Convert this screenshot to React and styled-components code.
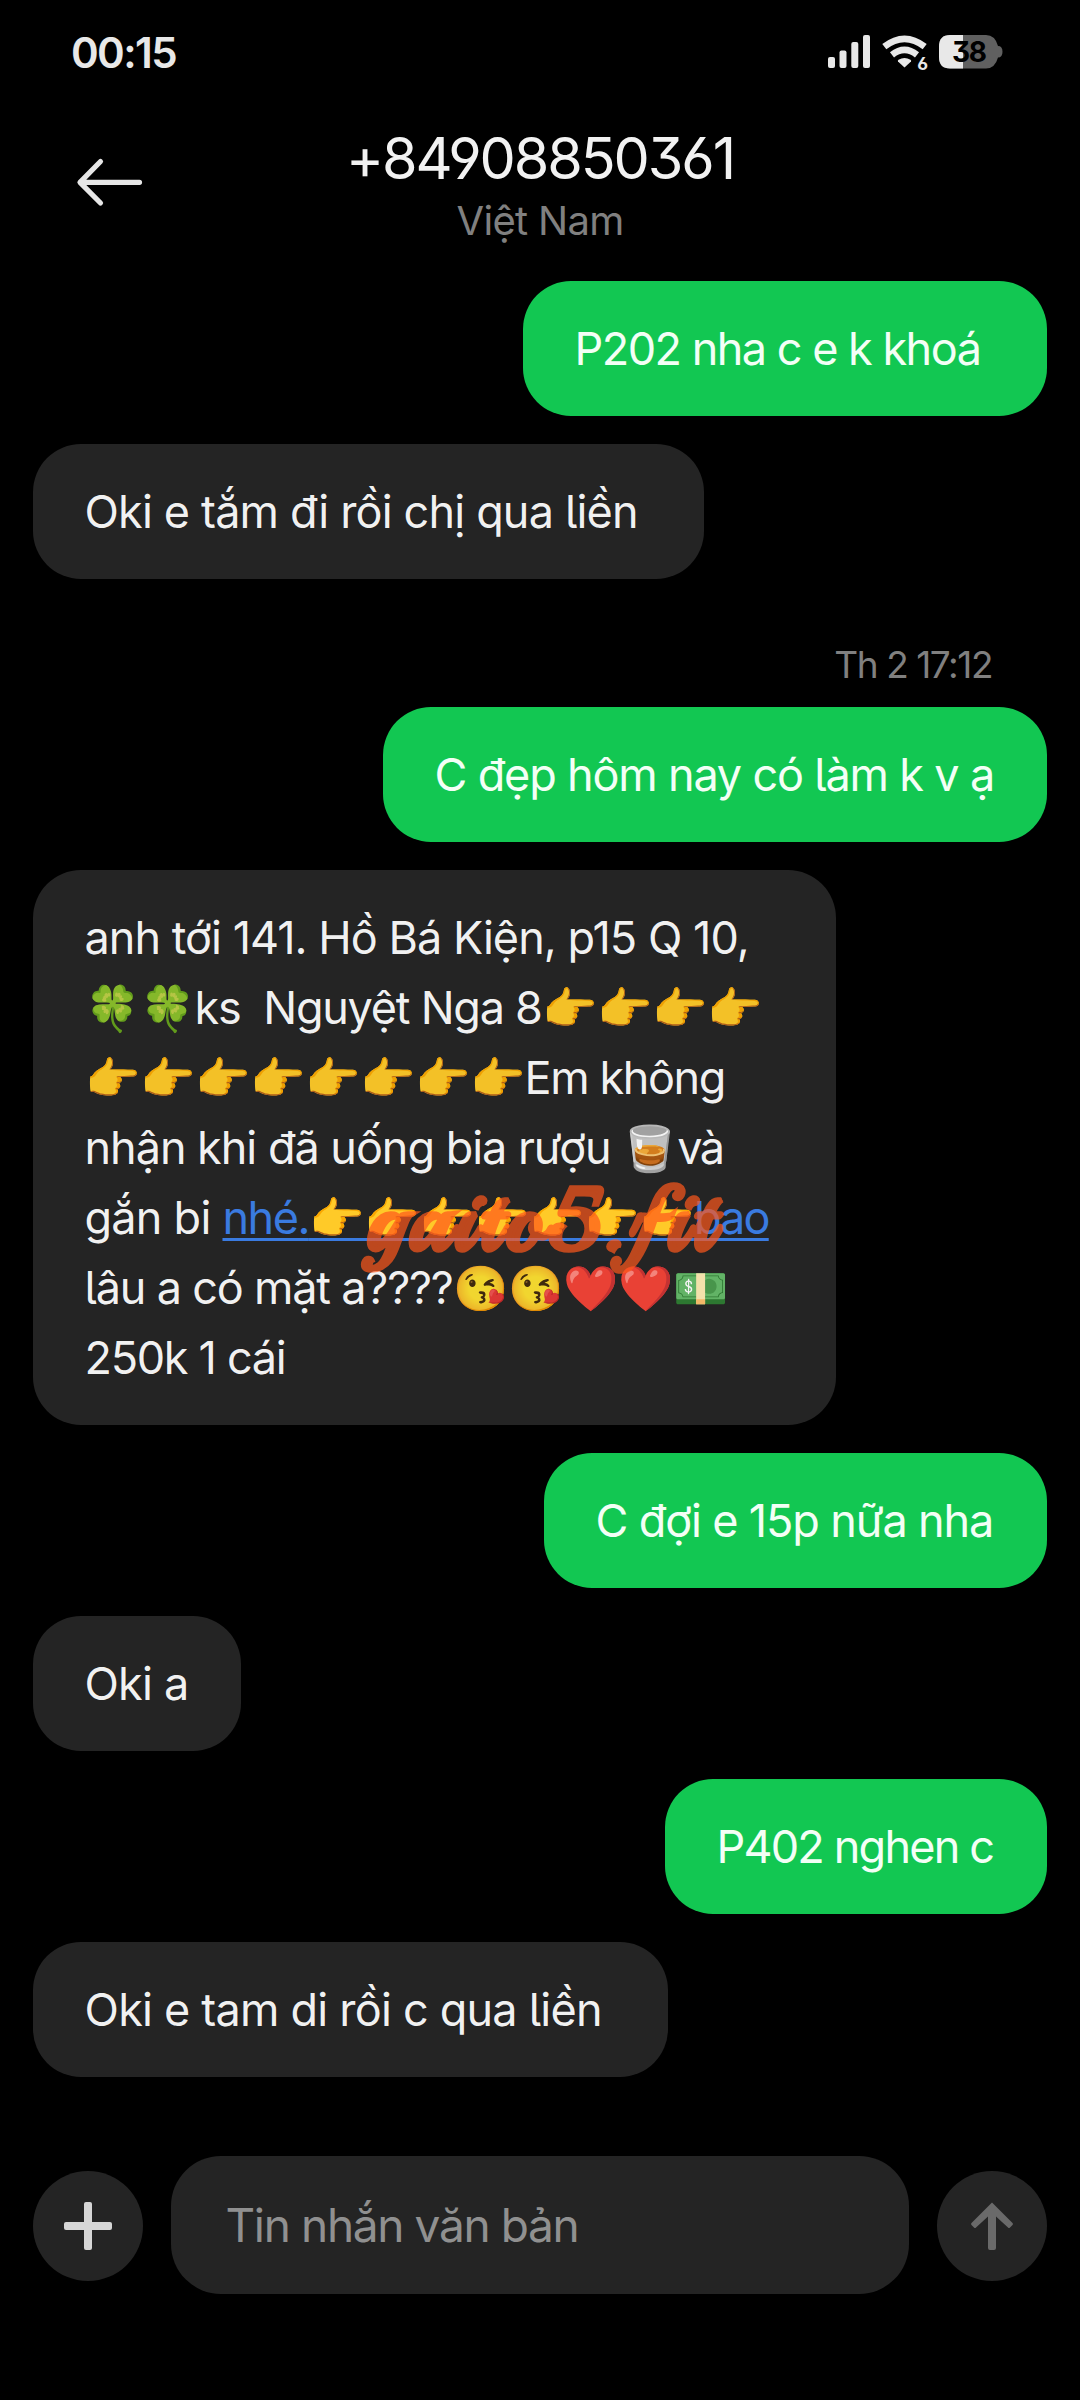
import React from "react";
import styled, { createGlobalStyle } from "styled-components";

const GlobalStyle = createGlobalStyle`
  * {
    box-sizing: border-box;
  }
  body {
    margin: 0;
    background-color: #000;
    font-family: Inter, "Noto Sans", sans-serif;
    font-feature-settings: "cv03", "cv04", "cv05", "cv09";
  }
`;

const Screen = styled.div`
  width: 1080px;
  height: 2400px;
  display: flex;
  flex-direction: column;
  background-color: #000;
  overflow: hidden;
`;

const StatusBar = styled.div`
  height: 104px;
  padding: 0 76px 0 71px;
  display: flex;
  align-items: center;
  justify-content: space-between;
`;

const Clock = styled.div`
  padding-top: 1px;
  color: #e8e8e8;
  font-size: 42px;
  font-weight: 600;
  line-height: 50px;
  letter-spacing: -1.6px;
`;

const StatusIcons = styled.svg`
  width: 176px;
  height: 40px;
  display: block;
`;

const Header = styled.header`
  height: 149px;
  padding: 0 76px;
  display: grid;
  grid-template-columns: 68px 1fr 68px;
`;

const BackButton = styled.button`
  height: 156px;
  padding: 0;
  border: 0;
  background: none;
  display: flex;
  align-items: center;
`;

const Contact = styled.div`
  padding-top: 19px;
  text-align: center;
`;

const Phone = styled.div`
  color: #f2f2f2;
  font-size: 57.5px;
  line-height: 70px;
  letter-spacing: -2.1px;
`;

const Region = styled.div`
  padding-top: 2px;
  color: #808080;
  font-size: 40px;
  line-height: 52px;
  letter-spacing: -0.7px;
`;

const Thread = styled.main`
  padding: 28px 33px 0;
  display: flex;
  flex-direction: column;
  gap: 28px;
`;

const Stamp = styled.div`
  height: 72px;
  margin-top: 28px;
  margin-bottom: -28px;
  padding: 7px 55px 0 0;
  color: #808080;
  font-size: 37px;
  line-height: 46px;
  letter-spacing: -1.45px;
  text-align: right;
`;

const Bubble = styled.div`
  position: relative;
  width: ${(p) => p.$width}px;
  padding: 33px 0 32px 51.5px;
  align-self: ${(p) => (p.$sent ? "flex-end" : "flex-start")};
  border-radius: 48px;
  background-color: ${(p) => (p.$sent ? "#12c752" : "#242424")};
  color: ${(p) => (p.$sent ? "#f3fff6" : "rgba(255, 255, 255, 0.95)")};
  font-size: 45px;
  font-weight: 380;
  line-height: 70px;
  white-space: pre;
`;

const Line = styled.div`
  height: 70px;
`;

const Run = styled.span`
  letter-spacing: ${(p) => p.$track}px;
`;

const Emoji = styled.span`
  font-size: 44.4px;
  line-height: 0;
  letter-spacing: 0;
`;

const Link = styled.span`
  color: #3a7be0;
  text-decoration: underline;
  text-decoration-thickness: 3px;
  text-underline-offset: 4px;
  text-decoration-skip-ink: none;
`;

const Watermark = styled.div`
  position: absolute;
  left: 334px;
  top: 291px;
  color: #ff581c;
  opacity: 0.7;
  font-family: "Playball", "Lobster Two", "Lobster", fantasy;
  font-size: 87px;
  font-weight: 700;
  line-height: 120px;
  letter-spacing: 5px;
  -webkit-text-stroke: 3px #ff581c;
`;

const Composer = styled.footer`
  margin-top: 79px;
  padding: 0 33px;
  display: flex;
  align-items: center;
  gap: 28px;
`;

const RoundButton = styled.button`
  width: 110px;
  height: 110px;
  margin-top: 2px;
  padding: 0;
  border: 0;
  border-radius: 50%;
  background-color: #242424;
  display: flex;
  align-items: center;
  justify-content: center;
`;

const Field = styled.div`
  flex: 1;
  height: 138px;
  padding-left: 54.5px;
  border-radius: 50px;
  background-color: #242424;
  color: #909090;
  font-size: 46px;
  line-height: 139px;
  letter-spacing: -1.35px;
`;

const SignalWifiBattery = () => (
  <StatusIcons viewBox="828 32 176 40">
    <g fill="#e8e8e8">
      <rect x="828" y="57" width="7" height="11" rx="2" />
      <rect x="839.5" y="50.5" width="7" height="17.5" rx="2" />
      <rect x="851.3" y="42" width="7" height="26" rx="2" />
      <rect x="863" y="35" width="7" height="33" rx="2" />
      <path d="M904.5 67.5 L898 61.5 Q897.5 60.5 898.5 59.8 Q904.5 56.2 910.5 59.8 Q911.5 60.5 911 61.5 Z" />
    </g>
    <g fill="none" stroke="#e8e8e8" strokeWidth="6.6">
      <path d="M884.3 46.6 Q904.5 31 924.7 46.6" />
      <path d="M892 54.8 Q904.5 45 917 54.8" />
    </g>
    <text x="917.3" y="69.5" fill="#e8e8e8" fontSize="17.5" fontWeight="700">
      6
    </text>
    <path
      d="M950 35 H986 Q995 35 998 46 Q1002.5 46 1002.5 51.7 Q1002.5 57.5 998 57.5 Q995 68.5 986 68.5 H950 Q939 68.5 939 57 V46.5 Q939 35 950 35 Z"
      fill="#606060"
    />
    <path
      d="M963 35 H950 Q939 35 939 46.5 V57 Q939 68.5 950 68.5 H963 Z"
      fill="#e8e8e8"
    />
    <text
      x="968.7"
      y="62"
      textAnchor="middle"
      fill="#000"
      fontSize="28"
      fontWeight="700"
      letterSpacing="-1.5"
    >
      38
    </text>
  </StatusIcons>
);

const BackIcon = () => (
  <svg
    width="68"
    height="50"
    viewBox="76 157 68 50"
    fill="none"
    stroke="#e6e6e6"
    strokeWidth="5.2"
    strokeLinecap="round"
    strokeLinejoin="round"
  >
    <path d="M100.5 161.5 L80 182.3 L100.5 203 M81 182.3 H139.5" />
  </svg>
);

const PlusIcon = () => (
  <svg width="48" height="48" viewBox="0 0 48 48" fill="#d6d6d6">
    <rect x="0" y="20" width="48" height="8" rx="2" />
    <rect x="20" y="0" width="8" height="48" rx="2" />
  </svg>
);

const SendIcon = () => (
  <svg width="48" height="48" viewBox="0 0 48 48" fill="#6a6a6a">
    <path d="M24 0.5 L44.5 21 Q45.5 22 44.5 23 L42 25.5 Q41 26.5 40 25.5 L28 14.5 V46 Q28 48 26 48 H22 Q20 48 20 46 V14.5 L8 25.5 Q7 26.5 6 25.5 L3.5 23 Q2.5 22 3.5 21 Z" />
  </svg>
);

const Message = ({ text, track, width, sent }) => (
  <Bubble $sent={sent} $width={width}>
    <Run $track={track}>{text}</Run>
  </Bubble>
);

const App = () => {
  return (
    <>
      <GlobalStyle />
      <Screen>
        <StatusBar>
          <Clock>00:15</Clock>
          <SignalWifiBattery />
        </StatusBar>
        <Header>
          <BackButton>
            <BackIcon />
          </BackButton>
          <Contact>
            <Phone>+84908850361</Phone>
            <Region>Việt Nam</Region>
          </Contact>
        </Header>
        <Thread>
          <Message sent width={524} track={-1.5} text="P202 nha c e k khoá " />
          <Message width={671} track={-0.83} text="Oki e tắm đi rồi chị qua liền " />
          <Stamp>Th 2 17:12</Stamp>
          <Message sent width={664} track={-1.17} text="C đẹp hôm nay có làm k v ạ" />
          <Bubble $width={803}>
            <Line>
              <Run $track={-0.96}>anh tới 141. Hồ Bá Kiện, p15 Q 10,</Run>
            </Line>
            <Line>
              <Emoji>🍀🍀</Emoji>
              <Run $track={-1.25}>ks  Nguyệt Nga 8</Run>
              <Emoji>👉👉👉👉</Emoji>
            </Line>
            <Line>
              <Emoji>👉👉👉👉👉👉👉👉</Emoji>
              <Run $track={-1.4}>Em không</Run>
            </Line>
            <Line>
              <Run $track={-1.02}>nhận khi đã uống bia rượu </Run>
              <Emoji>🥃</Emoji>
              <Run $track={-2.5}>và</Run>
            </Line>
            <Line>
              <Run $track={-0.75}>gắn bi </Run>
              <Link>
                <Run $track={-1.5}>nhé.</Run>
                <Emoji>👉👉👉👉👉👉👉</Emoji>
                <Run $track={-1.8}>bao</Run>
              </Link>
            </Line>
            <Line>
              <Run $track={-1.19}>lâu a có mặt a????</Run>
              <Emoji>😘😘❤️❤️💵</Emoji>
            </Line>
            <Line>
              <Run $track={-1.3}>250k 1 cái</Run>
            </Line>
            <Watermark>gaito5.fit</Watermark>
          </Bubble>
          <Message sent width={503} track={-1.13} text="C đợi e 15p nữa nha" />
          <Message width={208} track={-0.8} text="Oki a" />
          <Message sent width={382} track={-1.8} text="P402 nghen c" />
          <Message width={635} track={-0.78} text="Oki e tam di rồi c qua liền " />
        </Thread>
        <Composer>
          <RoundButton>
            <PlusIcon />
          </RoundButton>
          <Field>Tin nhắn văn bản</Field>
          <RoundButton>
            <SendIcon />
          </RoundButton>
        </Composer>
      </Screen>
    </>
  );
};

export default App;
